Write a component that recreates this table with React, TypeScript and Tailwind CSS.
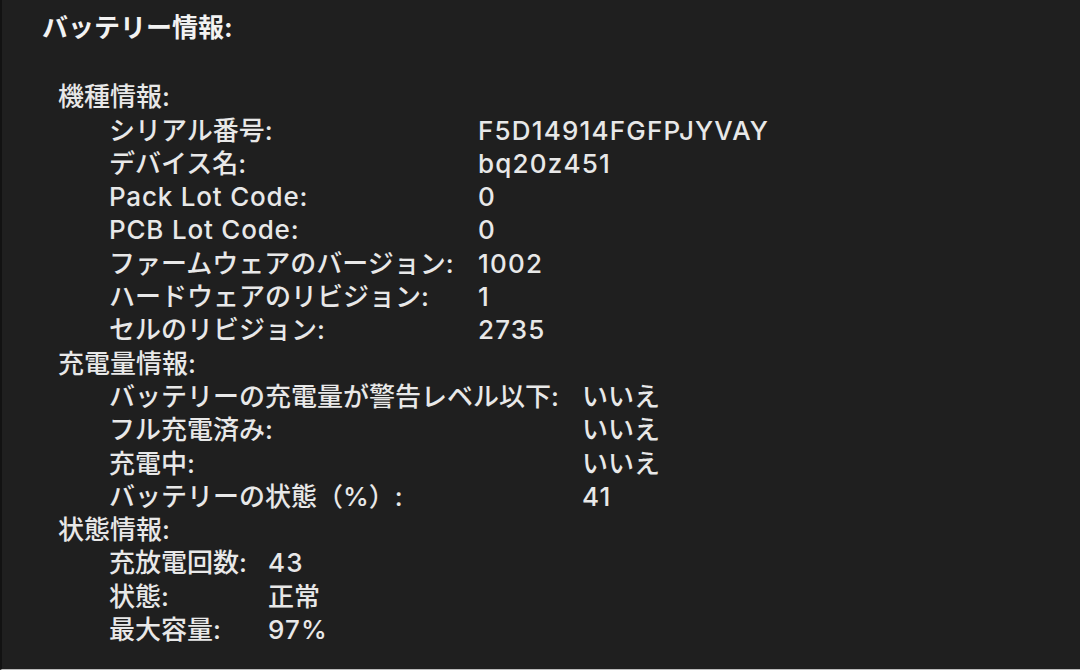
type Row = [string, string];

interface Section {
  title: string;
  labelWidth: string;
  rows: Row[];
}

const sections: Section[] = [
  {
    title: "機種情報:",
    labelWidth: "grid-cols-[369px_auto]",
    rows: [
      ["シリアル番号:", "F5D14914FGFPJYVAY"],
      ["デバイス名:", "bq20z451"],
      ["Pack Lot Code:", "0"],
      ["PCB Lot Code:", "0"],
      ["ファームウェアのバージョン:", "1002"],
      ["ハードウェアのリビジョン:", "1"],
      ["セルのリビジョン:", "2735"],
    ],
  },
  {
    title: "充電量情報:",
    labelWidth: "grid-cols-[473px_auto]",
    rows: [
      ["バッテリーの充電量が警告レベル以下:", "いいえ"],
      ["フル充電済み:", "いいえ"],
      ["充電中:", "いいえ"],
      ["バッテリーの状態（%）:", "41"],
    ],
  },
  {
    title: "状態情報:",
    labelWidth: "grid-cols-[159px_auto]",
    rows: [
      ["充放電回数:", "43"],
      ["状態:", "正常"],
      ["最大容量:", "97%"],
    ],
  },
];

// latin strings get a little extra tracking, like the system font in the shot
const isLatin = (s: string) => /^[\x20-\x7e]+$/.test(s);

export default function App() {
  return (
    <div
      className="flex h-[670px] w-[1080px] overflow-hidden border-b border-[#bdbdbd] border-l-2 border-l-[#121212] bg-[#1f1f1f] text-[26px] leading-[33.3px] font-medium text-[#e8e8e8]"
      style={{ fontFamily: 'Inter, "Noto Sans CJK JP", sans-serif' }}
    >
      <div className="pl-[40px] pt-[11px]">
        <h1 className="font-bold text-[#f2f2f2]">バッテリー情報:</h1>
        <div className="mt-[36px] pl-4">
          {sections.map((s) => (
            <section key={s.title}>
              <h2>{s.title}</h2>
              <dl className={`ml-[51px] grid ${s.labelWidth}`}>
                {s.rows.map(([label, value]) => (
                  <div key={label} className="contents">
                    <dt className={isLatin(label) ? "whitespace-nowrap tracking-[0.8px]" : "whitespace-nowrap"}>
                      {label}
                    </dt>
                    <dd className={isLatin(value) ? "whitespace-nowrap tracking-[1.2px]" : "whitespace-nowrap"}>
                      {value}
                    </dd>
                  </div>
                ))}
              </dl>
            </section>
          ))}
        </div>
      </div>
    </div>
  );
}
